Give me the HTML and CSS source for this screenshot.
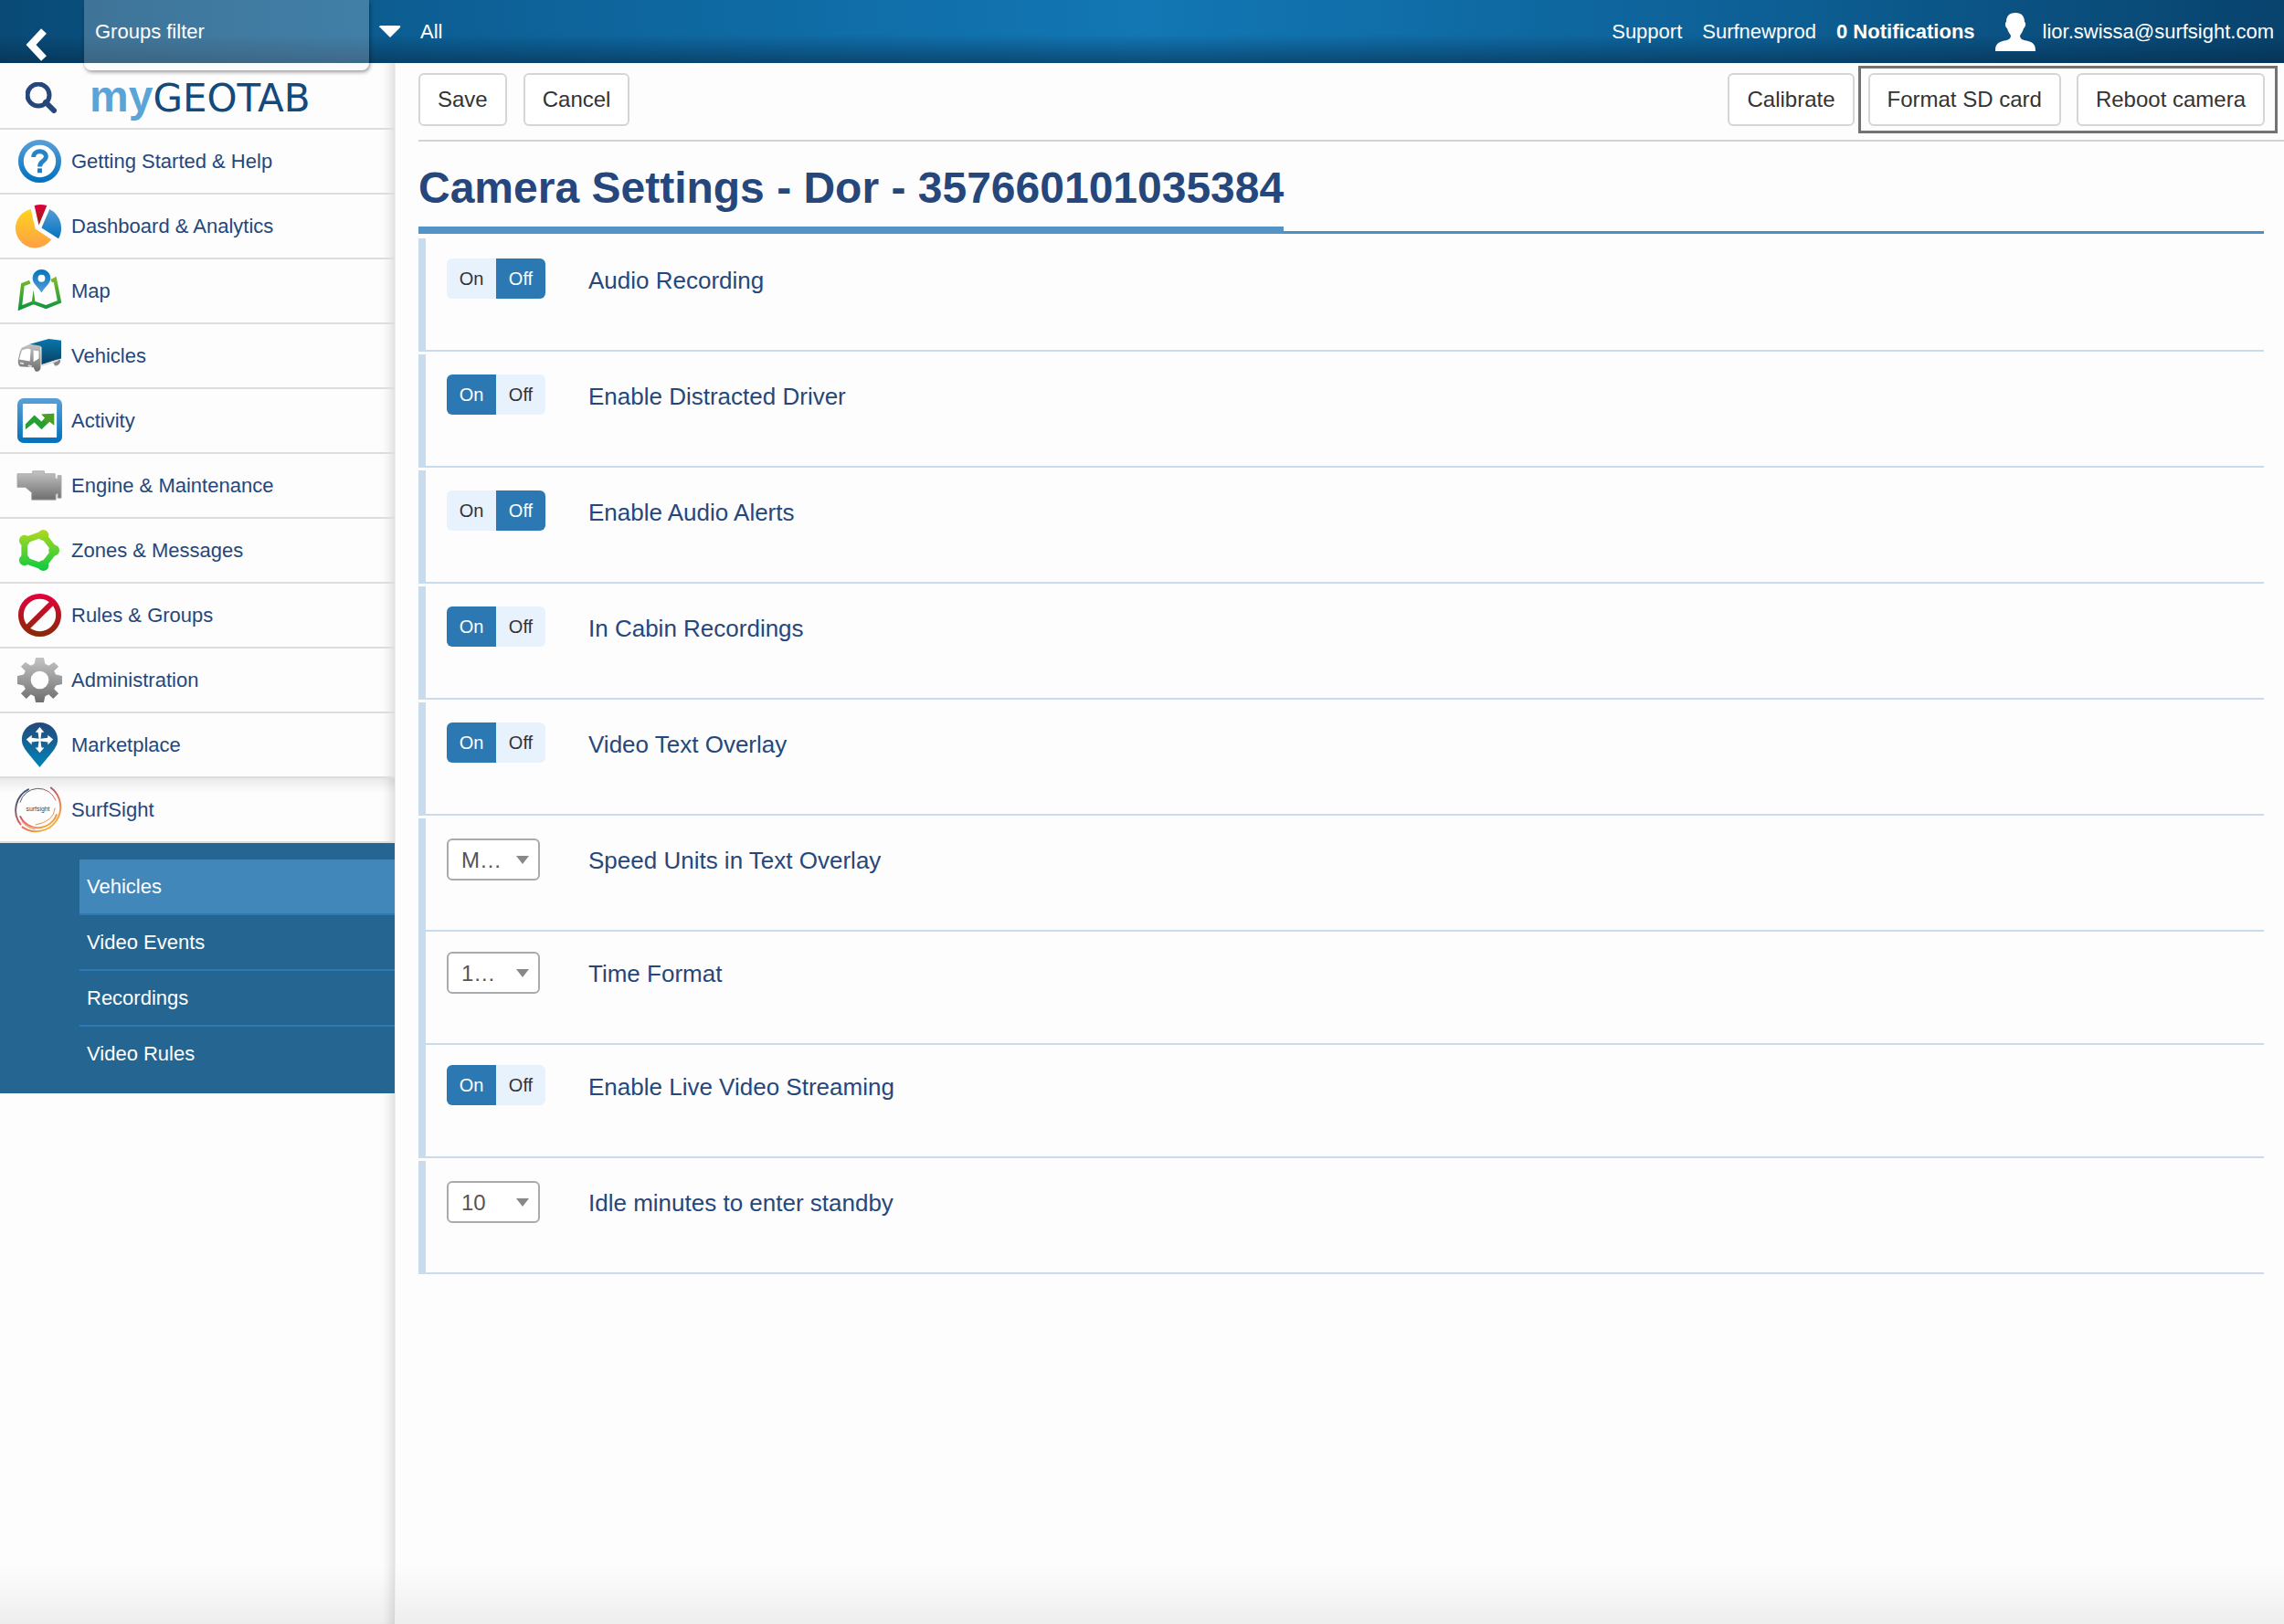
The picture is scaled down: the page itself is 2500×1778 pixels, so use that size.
FILE: index.html
```html
<!DOCTYPE html>
<html lang="en">

<head>
	<meta charset="UTF-8">
	<meta name="viewport" content="width=device-width, initial-scale=1.0">
	<title>MyGeotab - Camera Settings</title>
	<link rel="stylesheet" href="styles.css">
</head>

<body>
	<!-- shared gradients for the menu icons -->
	<svg class="defs" width="0" height="0" aria-hidden="true">
		<defs>
			<linearGradient id="blue" x1="0" y1="0" x2="0" y2="1">
				<stop offset="0" stop-color="#559dd6" />
				<stop offset="1" stop-color="#0573bd" />
			</linearGradient>
			<linearGradient id="blueFlip" x1="0" y1="0" x2="0" y2="1">
				<stop offset="0" stop-color="#0573bd" />
				<stop offset="1" stop-color="#559dd6" />
			</linearGradient>
			<linearGradient id="yellow" x1="0" y1="0" x2="0" y2="1">
				<stop offset="0" stop-color="#fdd41f" />
				<stop offset="1" stop-color="#ff9f45" />
			</linearGradient>
			<linearGradient id="red" x1="0" y1="0" x2="0" y2="1">
				<stop offset="0" stop-color="#e0003c" />
				<stop offset="1" stop-color="#8c2408" />
			</linearGradient>
			<linearGradient id="redLine" gradientUnits="userSpaceOnUse" x1="0" y1="1" x2="0" y2="49">
				<stop offset="0" stop-color="#e5003d" />
				<stop offset="1" stop-color="#872a05" />
			</linearGradient>
			<linearGradient id="green" gradientUnits="userSpaceOnUse" x1="0" y1="10" x2="0" y2="46">
				<stop offset="0" stop-color="#7dbb26" />
				<stop offset="1" stop-color="#0d9440" />
			</linearGradient>
			<linearGradient id="lime" gradientUnits="userSpaceOnUse" x1="0" y1="2" x2="0" y2="48">
				<stop offset="0" stop-color="#b2d81f" />
				<stop offset="1" stop-color="#0bca42" />
			</linearGradient>
			<linearGradient id="gray" x1="0" y1="0" x2="0" y2="1">
				<stop offset="0" stop-color="#c4c4c4" />
				<stop offset="1" stop-color="#6e6e6e" />
			</linearGradient>
			<linearGradient id="cargo" x1="0" y1="0" x2="0" y2="1">
				<stop offset="0" stop-color="#0878ab" />
				<stop offset="1" stop-color="#084062" />
			</linearGradient>
			<linearGradient id="pin" x1="0" y1="0" x2="0" y2="1">
				<stop offset="0" stop-color="#25477b" />
				<stop offset="1" stop-color="#0084b8" />
			</linearGradient>
			<linearGradient id="surf" gradientUnits="userSpaceOnUse" x1="10" y1="6" x2="42" y2="48">
				<stop offset="0" stop-color="#44566c" />
				<stop offset=".45" stop-color="#e2635f" />
				<stop offset="1" stop-color="#fcc02e" />
			</linearGradient>
		</defs>
	</svg>

	<header class="header">
		<button class="back" aria-label="Collapse menu">
			<svg width="24" height="36" viewBox="0 0 24 36"><path d="M20 3L6 18L20 33" fill="none" stroke="#fff" stroke-width="8" /></svg>
		</button>
		<button class="groups">Groups filter</button>
		<button class="groups-value">
			<svg width="24" height="13" viewBox="0 0 24 13"><path d="M0 2Q0 0 2 0H22Q24 0 23 2L12 13L1 2Z" fill="#fff" /></svg>
			All
		</button>
		<nav class="account">
			<a href="#">Support</a>
			<a href="#">Surfnewprod</a>
			<a href="#" class="notifications">0 Notifications</a>
			<a href="#" class="user">
				<svg width="44" height="42" viewBox="0 0 44 42"><path d="M22 0C29 0 32 4 32 10C34 11 33 16 31 17C30 21 28 23 27 25C27 29 31 30 36 31C42 33 44 35 44 42H0C0 35 2 33 8 31C13 30 17 29 17 25C16 23 14 21 13 17C11 16 10 11 12 10C12 4 15 0 22 0Z" fill="#fff" /></svg>
				lior.swissa@surfsight.com
			</a>
		</nav>
	</header>

	<div class="page">
		<aside class="sidebar">
			<div class="brand">
				<button class="search" aria-label="Search">
					<svg width="34" height="34" viewBox="0 0 34 34" fill="none" stroke="#25477b"><circle cx="14" cy="14" r="12" stroke-width="5" /><path d="M22 22L31 31" stroke-width="6" stroke-linecap="round" /></svg>
				</button>
				<a href="#" class="logo"><span class="my">my</span><span class="geotab">GEOTAB</span></a>
			</div>
			<ul class="menu">
				<li><a href="#">
					<svg class="icon" viewBox="0 0 50 50"><circle cx="25" cy="25" r="21" fill="#fff" stroke="url(#blue)" stroke-width="6" /><path d="M18 20.500C18 12 32 12 32 20C32 25 25 24.500 25 31" fill="none" stroke="#2684c6" stroke-width="5" /><path d="M22.500 33h5v5h-5z" fill="#1a7dc2" /></svg>
					Getting Started &amp; Help
				</a></li>
				<li><a href="#">
					<svg class="icon" viewBox="0 0 50 50"><path d="M20 28L15 6A22 22 0 1 0 38 40Z" fill="url(#yellow)" /><path d="M19 2Q26 0 33 2L24 24Z" fill="url(#red)" /><path d="M27 27L36 6A24 24 0 0 1 46 39Z" fill="url(#blue)" /></svg>
					Dashboard &amp; Analytics
				</a></li>
				<li><a href="#">
					<svg class="icon" viewBox="0 0 50 50"><path d="M14 15L6 18L3 44L18 38L32 43L47 37L42 12L38 14" fill="none" stroke="url(#green)" stroke-width="4" /><path d="M16 38L18 24L20 38Z" fill="#3fa534" /><path d="M27 1C33 1 37 5.500 37 11C37 17 31 20 27 27C23 20 17 17 17 11C17 5.500 21 1 27 1Z" fill="url(#blueFlip)" /><circle cx="27" cy="11" r="4" fill="#fff" /></svg>
					Map
				</a></li>
				<li><a href="#">
					<svg class="icon" viewBox="0 0 50 50"><path d="M40 33l8-4v3q-2 5-6 4z" fill="#888" /><path d="M14 12L35 6L49 8V28L27 35V15L14 13Z" fill="url(#cargo)" /><path d="M5 16L14 12L26 14V39Q24 44 20 42L18 38L3 37Q0 34 1 29L3 20Z" fill="url(#gray)" /><path d="M5 19Q12 16 15 18L14 31L2 29Z" fill="#fff" /><path d="M18 19L24 20V28L18 32Z" fill="#fff" /><path d="M3 33l4 1M12 36l4 1M27 36L45 30" stroke="#ddd" stroke-width="2" /></svg>
					Vehicles
				</a></li>
				<li><a href="#">
					<svg class="icon" viewBox="0 0 50 50"><rect x="3" y="3" width="44" height="44" rx="4" fill="#fff" stroke="url(#blue)" stroke-width="6" /><path d="M9 29L19 19L27 26L31 22L27 18L41 17V30L36 26L27 35L19 27L9 35Z" fill="#26a034" /><path d="M27 18L41 17V30L36 26L33 29L29 24L31 22Z" fill="#4a9f24" /></svg>
					Activity
				</a></li>
				<li><a href="#">
					<svg class="icon" viewBox="0 0 50 50"><path d="M0 12H17V9H30V12H42V17L45 18V14H49V39H45V34L43 35V41H16V33L9 27H0Z" fill="url(#gray)" stroke="#aaa" /></svg>
					Engine &amp; Maintenance
				</a></li>
				<li><a href="#">
					<svg class="icon" viewBox="0 0 50 50"><path d="M8 14L28 7L42 25L28 43L8 36Z" fill="none" stroke="url(#lime)" stroke-width="7" /><g fill="url(#lime)"><circle cx="8" cy="14" r="6" /><circle cx="29" cy="8" r="6" /><circle cx="41" cy="25" r="6" /><circle cx="29" cy="42" r="6" /><circle cx="8" cy="36" r="6" /></g></svg>
					Zones &amp; Messages
				</a></li>
				<li><a href="#">
					<svg class="icon" viewBox="0 0 50 50" fill="none" stroke="url(#redLine)"><circle cx="25" cy="25" r="21" stroke-width="6" /><path d="M10 40L40 10" stroke-width="6" /></svg>
					Rules &amp; Groups
				</a></li>
				<li><a href="#">
					<svg class="icon" viewBox="0 0 50 50"><path fill-rule="evenodd" d="M20.500 0H29.500L31 7L35 9L41 5L46 10L41 15L43 19L50 20.500V29.500L43 31L41 35L46 40L40 46L35 41L31 43L29.500 50H20.500L19 43L15 41L10 46L4 40L9 35L7 31L0 29.500V20.500L7 19L9 15L4 10L9 5L15 9L19 7ZM25 15A10 10 0 1 0 25 35A10 10 0 1 0 25 15Z" fill="url(#gray)" /></svg>
					Administration
				</a></li>
				<li><a href="#">
					<svg class="icon" viewBox="0 0 50 50"><path d="M25 0C36 0 45 8 45 19C45 28 39 33 25 50C11 33 5 28 5 19C5 8 14 0 25 0Z" fill="url(#pin)" /><path d="M25 5L30 11H27L26 18L34 17V14L40 19L34 25V22L26 21L27 28H30L25 34L20 28H23L24 21L16 22V25L10 19L16 14V17L24 18L23 11H20Z" fill="#fff" /></svg>
					Marketplace
				</a></li>
				<li class="open"><a href="#">
					<svg class="icon" viewBox="0 0 50 50"><g fill="none" stroke="url(#surf)" stroke-width="2"><path d="M13 2A26 26 0 0 0 4 42" /><path d="M3 17A21 21 0 0 1 43 15" stroke-width="1" /><path d="M37 0A26 26 0 0 1 5 44" /><path d="M3 32A22 22 0 0 0 44 30" /><path d="M5 38A24 24 0 0 0 20 47M42 23Q41 38 20 42" stroke-width="1" /></g><text class="surf-text" x="23" y="27" text-anchor="middle">surfsight</text></svg>
					SurfSight
				</a></li>
			</ul>
			<ul class="submenu">
				<li class="active"><a href="#">Vehicles</a></li>
				<li><a href="#">Video Events</a></li>
				<li><a href="#">Recordings</a></li>
				<li><a href="#">Video Rules</a></li>
			</ul>
		</aside>

		<main class="content">
			<div class="toolbar">
				<button class="btn">Save</button>
				<button class="btn">Cancel</button>
				<button class="btn calibrate">Calibrate</button>
				<div class="highlight">
					<button class="btn">Format SD card</button>
					<button class="btn">Reboot camera</button>
				</div>
			</div>

			<div class="title">
				<h1>Camera Settings - Dor - 357660101035384</h1>
			</div>

			<form class="settings">
				<section class="group">
					<div class="row">
						<div class="control toggle" role="radiogroup" aria-labelledby="audio">
							<label><input type="radio" name="audio"><span>On</span></label>
							<label><input type="radio" name="audio" checked><span>Off</span></label>
						</div>
						<span class="name" id="audio">Audio Recording</span>
					</div>
				</section>
				<section class="group">
					<div class="row">
						<div class="control toggle" role="radiogroup" aria-labelledby="distracted">
							<label><input type="radio" name="distracted" checked><span>On</span></label>
							<label><input type="radio" name="distracted"><span>Off</span></label>
						</div>
						<span class="name" id="distracted">Enable Distracted Driver</span>
					</div>
				</section>
				<section class="group">
					<div class="row">
						<div class="control toggle" role="radiogroup" aria-labelledby="alerts">
							<label><input type="radio" name="alerts"><span>On</span></label>
							<label><input type="radio" name="alerts" checked><span>Off</span></label>
						</div>
						<span class="name" id="alerts">Enable Audio Alerts</span>
					</div>
				</section>
				<section class="group">
					<div class="row">
						<div class="control toggle" role="radiogroup" aria-labelledby="cabin">
							<label><input type="radio" name="cabin" checked><span>On</span></label>
							<label><input type="radio" name="cabin"><span>Off</span></label>
						</div>
						<span class="name" id="cabin">In Cabin Recordings</span>
					</div>
				</section>
				<section class="group">
					<div class="row">
						<div class="control toggle" role="radiogroup" aria-labelledby="overlay">
							<label><input type="radio" name="overlay" checked><span>On</span></label>
							<label><input type="radio" name="overlay"><span>Off</span></label>
						</div>
						<span class="name" id="overlay">Video Text Overlay</span>
					</div>
				</section>
				<section class="group">
					<div class="row">
						<div class="control">
							<select id="units"><option>M…</option></select>
						</div>
						<label class="name" for="units">Speed Units in Text Overlay</label>
					</div>
					<div class="row">
						<div class="control">
							<select id="time"><option>1…</option></select>
						</div>
						<label class="name" for="time">Time Format</label>
					</div>
					<div class="row">
						<div class="control toggle" role="radiogroup" aria-labelledby="live">
							<label><input type="radio" name="live" checked><span>On</span></label>
							<label><input type="radio" name="live"><span>Off</span></label>
						</div>
						<span class="name" id="live">Enable Live Video Streaming</span>
					</div>
				</section>
				<section class="group">
					<div class="row">
						<div class="control">
							<select id="idle"><option>10</option></select>
						</div>
						<label class="name" for="idle">Idle minutes to enter standby</label>
					</div>
				</section>
			</form>
		</main>
	</div>
</body>

</html>
```
FILE: styles.css
```css
* {
	margin: 0;
	padding: 0;
	box-sizing: border-box;
}

body {
	min-height: 100vh;
	display: flex;
	flex-direction: column;
	font-family: "Liberation Sans", Arial, sans-serif;
	font-size: 22px;
	color: #25477b;
	background: #fdfdfd;
}

button,
select {
	font-family: inherit;
	font-size: inherit;
	border: none;
	background: none;
	cursor: pointer;
}

a {
	color: inherit;
	text-decoration: none;
}

ul {
	list-style: none;
}

.defs {
	position: absolute;
}

/* header */
.header {
	display: flex;
	height: 69px;
	color: #fff;
	background: linear-gradient(to bottom, rgba(4, 40, 70, 0) 55%, rgba(4, 40, 70, .55)), linear-gradient(to right, #094a76, #0d6096 20%, #1277b4 50%, #0d6096 77%, #08436d);
}

.back {
	width: 92px;
	padding: 28px 0 0 28px;
	text-align: left;
}

.back svg {
	display: block;
}

.groups {
	position: relative;
	width: 312px;
	height: 77px;
	padding: 0 0 8px 12px;
	color: #fff;
	text-align: left;
	background: rgba(255, 255, 255, .22);
	border-radius: 0 0 8px 8px;
	box-shadow: 1px 2px 4px rgba(0, 0, 0, .4);
}

.groups-value {
	display: flex;
	align-items: center;
	gap: 21px;
	padding-left: 11px;
	color: #fff;
}

.account {
	display: flex;
	align-items: center;
	gap: 22px;
	margin-left: auto;
	padding-right: 11px;
}

.notifications {
	font-weight: bold;
}

.user {
	display: flex;
	align-items: center;
	gap: 8px;
}

/* layout */
.page {
	display: flex;
	flex: 1;
	background: linear-gradient(to top, #eee, #fdfdfd 64px);
}

.sidebar {
	width: 433px;
	flex: none;
	border-right: 1px solid #eee;
	box-shadow: inset -12px 0 12px -8px rgba(0, 0, 0, .14);
}

.brand {
	display: flex;
	align-items: center;
	height: 73px;
	padding: 4px 0 0 28px;
	border-bottom: 2px solid #ddd;
}

.search svg {
	display: block;
}

.logo {
	display: flex;
	align-items: baseline;
	margin-left: 36px;
	line-height: 44px;
}

.my {
	color: #5ba4d8;
	font-size: 48px;
	font-weight: bold;
}

.geotab {
	color: #134a7c;
	font-family: "DejaVu Sans", sans-serif;
	font-size: 42px;
}

.menu li {
	height: 71px;
	border-bottom: 2px solid #ddd;
}

.menu a {
	display: flex;
	align-items: center;
	gap: 10px;
	height: 100%;
	padding-left: 19px;
}

.icon {
	width: 49px;
	height: 49px;
	overflow: visible;
}

.menu .open {
	background: linear-gradient(to bottom, rgba(0, 0, 0, .08), rgba(0, 0, 0, 0) 16px);
}

.surf-text {
	font-size: 7px;
	fill: #444;
}

.submenu {
	padding: 18px 0 14px 87px;
	color: #fff;
	background: #256591;
}

.submenu a {
	display: block;
	padding-left: 8px;
	line-height: 59px;
	border-bottom: 2px solid #2b79b5;
}

.submenu li:last-child a {
	border-bottom: none;
}

.submenu .active {
	background: #4287ba;
}

.content {
	flex: 1;
	padding-left: 25px;
}

/* toolbar */
.toolbar {
	display: flex;
	align-items: center;
	gap: 18px;
	height: 86px;
	padding: 0 7px 4px 0;
	border-bottom: 2px solid #d3d3d3;
}

.btn {
	height: 58px;
	padding: 0 19px;
	font-size: 24px;
	color: #333;
	background: #fff;
	border: 2px solid #d5d5d5;
	border-radius: 6px;
}

.calibrate {
	margin-left: auto;
}

.highlight {
	display: flex;
	gap: 17px;
	margin-left: -14px;
	padding: 5px 11px 5px 8px;
	border: 3px solid #737373;
}

/* settings */
.title {
	margin-right: 22px;
	border-bottom: 3px solid #4b8fc3;
}

.title h1 {
	display: inline-block;
	margin-bottom: -3px;
	padding: 23px 0 14px;
	font-size: 48px;
	line-height: 56px;
	border-bottom: 8px solid #5493c5;
	vertical-align: top;
}

.settings {
	margin: 5px 22px 0 0;
}

.group {
	margin-bottom: 3px;
	border-left: 8px solid #c8dcee;
}

.row {
	display: flex;
	height: 124px;
	padding: 22px 0 0 23px;
	border-bottom: 2px solid #c8dcee;
}

.control {
	display: flex;
	width: 155px;
}

.toggle label {
	position: relative;
	height: 44px;
	cursor: pointer;
}

.toggle input {
	position: absolute;
	opacity: 0;
}

.toggle span {
	display: block;
	width: 54px;
	font-size: 20px;
	line-height: 44px;
	text-align: center;
	color: #333;
	background: #e8f2fd;
	border-radius: 6px 0 0 6px;
}

.toggle label + label span {
	border-radius: 0 6px 6px 0;
}

.toggle input:checked + span {
	color: #fff;
	background: #2c78b2;
}

select {
	width: 102px;
	height: 46px;
	padding-left: 14px;
	appearance: none;
	color: #555;
	font-size: 24px;
	background: #fff;
	border: 2px solid #aaa;
	border-radius: 6px;
}

/* drop-down arrow */
.control:not(.toggle)::after {
	content: "";
	width: 14px;
	height: 9px;
	margin: 19px 0 0 -26px;
	background: #888;
	clip-path: polygon(0 0, 100% 0, 50% 100%);
	pointer-events: none;
	z-index: 1;
}

.name {
	font-size: 26px;
	line-height: 48px;
}
```
